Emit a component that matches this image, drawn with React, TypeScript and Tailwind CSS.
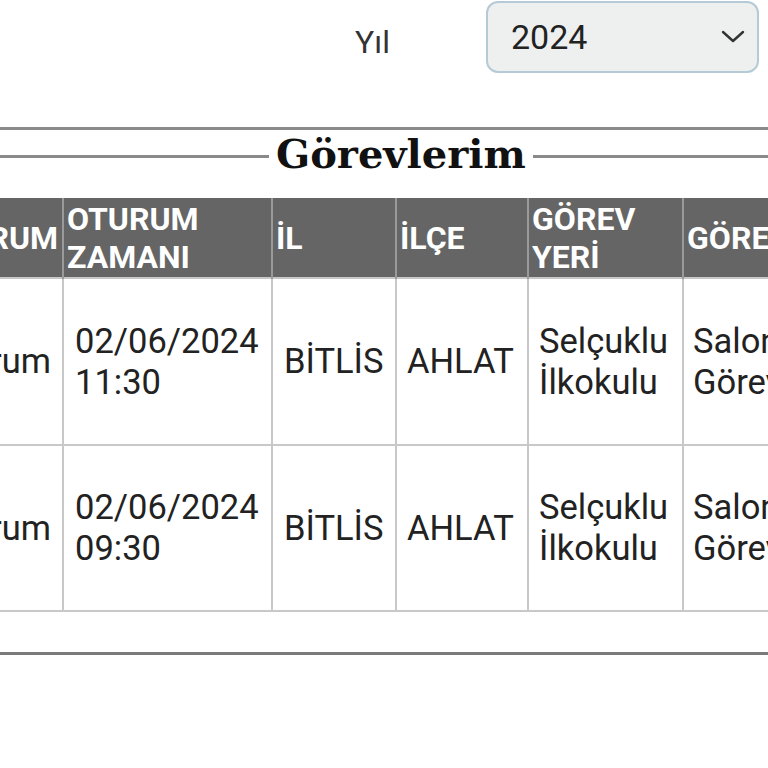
import React from "react";

const rows = [
  { o: "Oturum", t1: "02/06/2024", t2: "11:30" },
  { o: "Oturum", t1: "02/06/2024", t2: "09:30" },
];

export default function App() {
  return (
    <div
      className="w-[768px] h-[768px] overflow-hidden bg-white text-[#222]"
      style={{ fontFamily: "Roboto, 'Noto Sans', sans-serif" }}
    >
      {/* Year filter */}
      <div className="flex items-start h-[74px]">
        <div className="w-[355px]" />
        <div className="mt-[23px] text-[32px] leading-[38px] text-[#333]">Yıl</div>
        <div className="ml-[96px] mt-[1px] w-[273px] h-[72px] rounded-[12px] border-2 border-[#b4cad6] bg-[#eef0f0] flex items-center pl-[23px] pr-[12px]">
          <span className="text-[34px] leading-[40px] text-[#222] flex-1">2024</span>
          <svg width="24" height="14" viewBox="0 0 24 14" fill="none">
            <path d="M2 2 L12 11 L22 2" stroke="#333" strokeWidth="2.4" strokeLinecap="round" strokeLinejoin="round" />
          </svg>
        </div>
      </div>

      {/* top rule */}
      <div className="mt-[53px] h-[3px] bg-[#8a8a8a]" />

      {/* title with lines */}
      <div className="flex items-center h-[52px]">
        <div className="w-[269px] h-[3px] bg-[#8a8a8a]" />
        <div
          className="px-[7px] -mt-[4px] text-[40px] leading-[42px] font-bold text-[#111]"
          style={{ fontFamily: "'DejaVu Serif', 'Liberation Serif', serif" }}
        >
          Görevlerim
        </div>
        <div className="flex-1 h-[3px] bg-[#8a8a8a]" />
      </div>

      {/* table */}
      <div className="mt-[16px] w-[768px] overflow-hidden">
        <table className="border-collapse table-fixed ml-[-80px] w-[1107px]">
          <colgroup>
            <col className="w-[142px]" />
            <col className="w-[209px]" />
            <col className="w-[124px]" />
            <col className="w-[132px]" />
            <col className="w-[155px]" />
            <col className="w-[345px]" />
          </colgroup>
          <thead>
            <tr className="h-[80px] bg-[#656565] text-white font-bold text-[32px] leading-[38px]">
              <th className="border-r-2 border-[#9a9a9a] text-right pr-[4px] align-middle font-bold">OTURUM</th>
              <th className="border-x-2 border-[#9a9a9a] text-left pl-[3px] align-middle font-bold">OTURUM ZAMANI</th>
              <th className="border-x-2 border-[#9a9a9a] text-left pl-[3px] align-middle font-bold">İL</th>
              <th className="border-x-2 border-[#9a9a9a] text-left pl-[3px] align-middle font-bold">İLÇE</th>
              <th className="border-x-2 border-[#9a9a9a] text-left pl-[3px] align-middle font-bold">GÖREV YERİ</th>
              <th className="border-l-2 border-[#9a9a9a] text-left pl-[3px] align-middle font-bold whitespace-nowrap">GÖREV TÜRÜ</th>
            </tr>
          </thead>
          <tbody className="text-[34.5px] leading-[41px] text-[#222]">
            {rows.map((r, i) => (
              <tr key={i} className={i === 0 ? "h-[167px]" : "h-[166px]"}>
                <td className="border-2 border-[#c8c8c8] text-right pr-[11px] align-middle">{r.o}</td>
                <td className="border-2 border-[#c8c8c8] text-left pl-[11px] align-middle">
                  {r.t1}
                  <br />
                  {r.t2}
                </td>
                <td className="border-2 border-[#c8c8c8] text-left pl-[11px] align-middle">BİTLİS</td>
                <td className="border-2 border-[#c8c8c8] text-left pl-[10px] align-middle">AHLAT</td>
                <td className="border-2 border-[#c8c8c8] text-left pl-[10px] align-middle">
                  Selçuklu
                  <br />
                  İlkokulu
                </td>
                <td className="border-2 border-[#c8c8c8] text-left pl-[9px] align-middle whitespace-nowrap">
                  Salon
                  <br />
                  Görevlisi
                </td>
              </tr>
            ))}
          </tbody>
        </table>
      </div>

      {/* bottom rule */}
      <div className="mt-[40px] h-[3px] bg-[#7a7a7a]" />
    </div>
  );
}
